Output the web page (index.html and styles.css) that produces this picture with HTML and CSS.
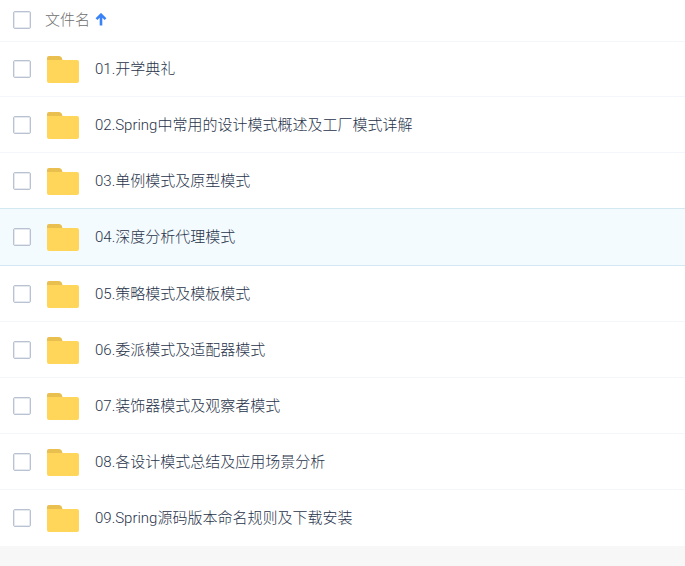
FILE: index.html
```html
<!DOCTYPE html>
<html lang="zh-CN">
<head>
    <meta charset="UTF-8">
    <meta name="viewport" content="width=device-width, initial-scale=1.0">
    <title>文件列表</title>
    <link rel="stylesheet" href="styles.css">
</head>
<body>
    <svg class="symbols" aria-hidden="true">
        <symbol id="folder" viewBox="0 0 32 28">
            <path fill="#e9bf50" d="M0 9V3Q0 1 2 1H12Q14 1 14.600 2.500L17 9Z"/>
            <path fill="#ffd65a" d="M0 5H30Q32 5 32 7V26Q32 28 30 28H2Q0 28 0 26Z"/>
        </symbol>
    </svg>
    <table class="file-list">
        <thead>
            <tr>
                <th class="check"><input type="checkbox" id="all" aria-label="全选"></th>
                <th class="title">
                    <button class="sort" type="button">文件名
                        <svg class="arrow" viewBox="0 0 12 13" aria-hidden="true">
                            <path d="M6 12.500V2M1.500 6.200L6 1.700L10.500 6.200" fill="none" stroke="#3b82f6" stroke-width="2.600"/>
                        </svg>
                    </button>
                </th>
            </tr>
        </thead>
        <tbody>
            <tr>
                <td class="check"><input type="checkbox" id="f1"></td>
                <td><label class="name" for="f1"><svg class="folder"><use href="#folder"/></svg>01.开学典礼</label></td>
            </tr>
            <tr>
                <td class="check"><input type="checkbox" id="f2"></td>
                <td><label class="name" for="f2"><svg class="folder"><use href="#folder"/></svg>02.Spring中常用的设计模式概述及工厂模式详解</label></td>
            </tr>
            <tr>
                <td class="check"><input type="checkbox" id="f3"></td>
                <td><label class="name" for="f3"><svg class="folder"><use href="#folder"/></svg>03.单例模式及原型模式</label></td>
            </tr>
            <tr class="active">
                <td class="check"><input type="checkbox" id="f4"></td>
                <td><label class="name" for="f4"><svg class="folder"><use href="#folder"/></svg>04.深度分析代理模式</label></td>
            </tr>
            <tr>
                <td class="check"><input type="checkbox" id="f5"></td>
                <td><label class="name" for="f5"><svg class="folder"><use href="#folder"/></svg>05.策略模式及模板模式</label></td>
            </tr>
            <tr>
                <td class="check"><input type="checkbox" id="f6"></td>
                <td><label class="name" for="f6"><svg class="folder"><use href="#folder"/></svg>06.委派模式及适配器模式</label></td>
            </tr>
            <tr>
                <td class="check"><input type="checkbox" id="f7"></td>
                <td><label class="name" for="f7"><svg class="folder"><use href="#folder"/></svg>07.装饰器模式及观察者模式</label></td>
            </tr>
            <tr>
                <td class="check"><input type="checkbox" id="f8"></td>
                <td><label class="name" for="f8"><svg class="folder"><use href="#folder"/></svg>08.各设计模式总结及应用场景分析</label></td>
            </tr>
            <tr>
                <td class="check"><input type="checkbox" id="f9"></td>
                <td><label class="name" for="f9"><svg class="folder"><use href="#folder"/></svg>09.Spring源码版本命名规则及下载安装</label></td>
            </tr>
        </tbody>
    </table>
</body>
</html>
```
FILE: styles.css
```css
body {
    margin: 0;
    background-color: #f7f7f7;
    color: #28334a;
    font-family: Roboto, "Noto Sans CJK SC", sans-serif;
    font-size: 15px;
    font-weight: 300;
    line-height: 20px;
}
.symbols {
    display: none;
}
.file-list {
    width: 100%;
    border-spacing: 0;
    background-color: #fff;
}
th,
td {
    box-sizing: border-box;
    padding: 0;
    text-align: left;
    vertical-align: middle;
}
th {
    height: 41px;
    padding-bottom: 2px;
    font-weight: 300;
}
td {
    height: 56px;
    border-top: 1px solid #f3f6fa;
}
.check {
    width: 45px;
    padding-left: 13px;
}
tbody tr:first-child td {
    height: 55px;
}
.active td {
    height: 57px;
    background-color: #f4fbff;
    border-top-color: #d3e8f2;
}
.active + tr td {
    border-top-color: #d3e8f2;
}
tbody tr:last-child td {
    height: 57px;
}
input {
    display: block;
    appearance: none;
    box-sizing: border-box;
    width: 18px;
    height: 18px;
    margin: 0;
    border: 1px solid #b9c2d2;
    border-radius: 2px;
    box-shadow: inset 0 0 0 1px #e6eaf0;
    background-color: #fff;
}
input:checked {
    background-color: #3b82f6;
}
.sort {
    display: flex;
    align-items: center;
    gap: 5px;
    padding: 0;
    border: none;
    background: none;
    color: #6e6e6e;
    font: inherit;
    cursor: pointer;
}
.arrow {
    width: 12px;
    height: 13px;
}
.name {
    display: flex;
    align-items: center;
    gap: 16px;
}
.folder {
    width: 32px;
    height: 28px;
    margin-left: 2px;
}
```
